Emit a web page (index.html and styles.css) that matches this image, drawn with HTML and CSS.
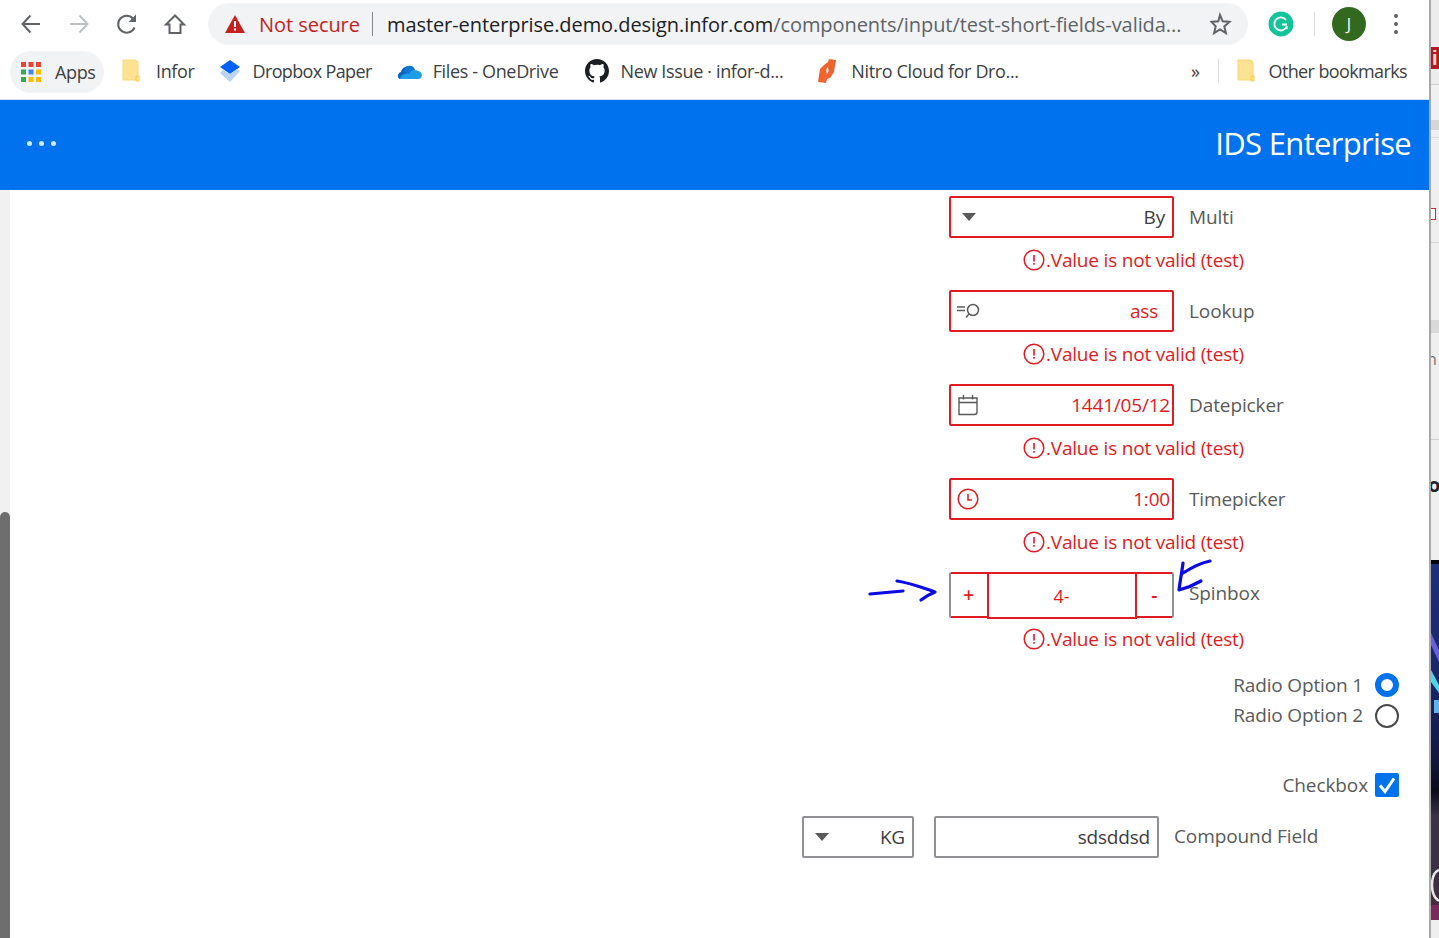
FILE: index.html
```html
<!DOCTYPE html>
<html lang="en">
<head>
<meta charset="utf-8">
<title>IDS Enterprise</title>
<link rel="stylesheet" href="styles.css">
</head>
<body>
<div class="desktop">
  <main class="browser">
    <div class="toolbar">
      <svg class="navicon" width="24" height="24" viewBox="0 0 24 24"><path d="M21 12H4M11.500 3.500 3.500 12l8 8.500" fill="none" stroke="#5f6368" stroke-width="2"/></svg>
      <svg class="navicon" width="24" height="24" viewBox="0 0 24 24"><path d="M3 12h17M12.500 3.500l8 8.500-8 8.500" fill="none" stroke="#bdc1c6" stroke-width="2"/></svg>
      <svg class="navicon" width="24" height="24" viewBox="0 0 24 24"><path d="M19.500 15.500A8.500 8.500 0 1 1 18 6.500" fill="none" stroke="#5f6368" stroke-width="2"/><path d="M21 2.500V10h-7.500z" fill="#5f6368"/></svg>
      <svg class="navicon" width="24" height="24" viewBox="0 0 24 24"><path d="M12 3.500 3 12.500h3.500V21h11v-8.500H21z" fill="none" stroke="#5f6368" stroke-width="2"/></svg>
      <div class="omnibox">
        <svg class="warn" width="20" height="18" viewBox="0 0 20 18"><path d="M10 0 20 18H0z" fill="#c5221f"/><path d="M9 6h2v6H9zM9 13.500h2v2H9z" fill="#fff"/></svg>
        <span class="insecure">Not secure</span>
        <span class="omnisep"></span>
        <span class="url">master-enterprise.demo.design.infor.com<span class="urlpath">/components/input/test-short-fields-valida...</span></span>
        <svg class="star" width="24" height="24" viewBox="0 0 24 24"><path d="m12 3 2.700 6.300 6.800.6-5.200 4.500 1.600 6.700-5.900-3.600-5.900 3.600 1.600-6.700L3.500 9.900l6.800-.6z" fill="none" stroke="#5f6368" stroke-width="2"/></svg>
      </div>
      <div class="ext">
        <svg width="26" height="26" viewBox="0 0 26 26"><circle cx="13" cy="13" r="12.500" fill="#15c39a"/><path d="M18 9a6.500 6.500 0 1 0 1 6l-.5 3M19 13.500h-5" fill="none" stroke="#fff" stroke-width="1.800"/></svg>
        <span class="extsep"></span>
        <span class="avatar">J</span>
        <svg class="kebab" width="6" height="22" viewBox="0 0 6 22"><circle cx="3" cy="3" r="2" fill="#5f6368"/><circle cx="3" cy="11" r="2" fill="#5f6368"/><circle cx="3" cy="19" r="2" fill="#5f6368"/></svg>
      </div>
    </div>
    <div class="bookmarks">
      <div class="bm apps">
        <svg width="20" height="20" viewBox="0 0 20 20"><g fill="#ea4335"><rect x="0" y="0" width="5" height="5"/><rect x="7.500" y="0" width="5" height="5"/><rect x="15" y="0" width="5" height="5"/></g><g fill="#34a853"><rect x="0" y="7.500" width="5" height="5"/><rect x="0" y="15" width="5" height="5"/></g><rect x="7.500" y="15" width="5" height="5" fill="#fbbc04"/><rect x="7.500" y="7.500" width="5" height="5" fill="#4285f4"/><g fill="#fbbc04"><rect x="15" y="7.500" width="5" height="5"/><rect x="15" y="15" width="5" height="5"/></g></svg>
        <span>Apps</span>
      </div>
      <div class="bm infor">
        <svg class="folder" width="18" height="24" viewBox="0 0 18 24"><path d="M1 1h13l2 2v18H1z" fill="#fde293" stroke="#fbd871"/><path d="M14 17h3v5h-3z" fill="none" stroke="#f7cb4d"/></svg>
        <span>Infor</span>
      </div>
      <div class="bm dropbox">
        <svg width="22" height="24" viewBox="0 0 22 24"><path d="M11 1 21 8l-10 7L1 8z" fill="#0061fe"/><path d="m11 15 7-5 3 2-10 11L1 14l3-3z" fill="#bcd4ef"/></svg>
        <span class="dropbox-name">Dropbox Paper</span>
      </div>
      <div class="bm onedrive">
        <svg width="26" height="18" viewBox="0 0 26 18"><path d="M3 17c-3-1-3-6 1-7 1-6 9-8 12-3l-5 7z" fill="#0a64b8"/><path d="M7 8c3-6 10-5 11 0l-7 5z" fill="#0f78d4"/><path d="M3 17h19c4-1 4-7-1-8-3-2-7-1-9 3-4-1-9 1-9 5z" fill="#1f9ee8"/></svg>
        <span>Files - OneDrive</span>
      </div>
      <div class="bm github">
        <svg width="24" height="24" viewBox="0 0 16 16"><path d="M8 0C3.580 0 0 3.580 0 8c0 3.540 2.290 6.530 5.470 7.590.4.070.55-.17.55-.38v-1.340c-2.220.48-2.690-1.070-2.690-1.070-.36-.92-.89-1.170-.89-1.170-.73-.5.050-.49.050-.49.800.060 1.230.83 1.230.83.710 1.220 1.870.87 2.330.66.070-.52.280-.87.500-1.070-1.780-.2-3.640-.89-3.640-3.950 0-.87.310-1.590.82-2.150-.08-.2-.36-1.020.080-2.120 0 0 .67-.21 2.200.82A7.660 7.660 0 0 1 8 3.910c.68 0 1.360.09 2 .27 1.530-1.040 2.200-.82 2.200-.82.440 1.100.16 1.920.08 2.120.51.560.82 1.270.82 2.150 0 3.070-1.870 3.750-3.650 3.950.29.250.54.730.54 1.480v2.200c0 .21.150.46.55.38A8.010 8.010 0 0 0 16 8c0-4.420-3.580-8-8-8z" fill="#1b1f23"/></svg>
        <span>New Issue · infor-d...</span>
      </div>
      <div class="bm nitro">
        <svg width="20" height="26" viewBox="0 0 20 26"><path d="M7 7 11 4l1-3 7 1-2 12-4 6-3 1-1 4-8-1 2-13z" fill="#f0642f"/><path d="M10.500 9c1.500 2 1.500 5-.5 7-1-2-1-5 .5-7z" fill="#fff"/></svg>
        <span>Nitro Cloud for Dro...</span>
      </div>
      <div class="bm-end">
        <span class="more">»</span>
        <span class="bmsep"></span>
        <svg class="folder" width="18" height="24" viewBox="0 0 18 24"><path d="M1 1h13l2 2v18H1z" fill="#fde293" stroke="#fbd871"/><path d="M14 17h3v5h-3z" fill="none" stroke="#f7cb4d"/></svg>
        <span class="otherbm">Other bookmarks</span>
      </div>
    </div>
    <header class="appheader">
      <span class="dots"><i></i><i></i><i></i></span>
      <h1 class="apptitle">IDS Enterprise</h1>
    </header>
    <div class="content">
      <div class="scrolltrack"><div class="scrollthumb"></div></div>
      <form class="form">
        <div class="field">
          <div class="input invalid">
            <svg class="caret" width="14" height="8" viewBox="0 0 14 8"><path d="M0 0h14L7 8z" fill="#5a5a5a"/></svg>
            <span class="val val-dark">By</span>
          </div>
          <span class="label">Multi</span>
        </div>
        <div class="error"><svg class="erricon" width="22" height="22" viewBox="0 0 22 22"><circle cx="11" cy="11" r="9.800" fill="none" stroke="#e01b22" stroke-width="1.500"/><path d="M10.200 6h1.600v6.500h-1.600zM10.200 14h1.600v1.800h-1.600z" fill="#e01b22"/></svg><span>.Value is not valid (test)</span></div>
        <div class="field">
          <div class="input invalid">
            <svg class="inicon inicon-lookup" width="24" height="20" viewBox="0 0 24 20"><path d="M0 6h8M0 9.500h8" stroke="#5a5a5a" stroke-width="1.300"/><circle cx="16" cy="9" r="5.500" fill="none" stroke="#5a5a5a" stroke-width="1.500"/><path d="m12 13-3 3.500" stroke="#5a5a5a" stroke-width="1.500"/></svg>
            <span class="val val-pad">ass</span>
          </div>
          <span class="label">Lookup</span>
        </div>
        <div class="error"><svg class="erricon" width="22" height="22" viewBox="0 0 22 22"><circle cx="11" cy="11" r="9.800" fill="none" stroke="#e01b22" stroke-width="1.500"/><path d="M10.200 6h1.600v6.500h-1.600zM10.200 14h1.600v1.800h-1.600z" fill="#e01b22"/></svg><span>.Value is not valid (test)</span></div>
        <div class="field">
          <div class="input invalid">
            <svg class="inicon" width="24" height="24" viewBox="0 0 24 24"><path d="M3 5h18v14c0 1.500-1 2.500-2.500 2.500H3zM3 9.500h18M7.500 2v4.500M16.500 2v4.500" fill="none" stroke="#5a5a5a" stroke-width="1.400"/></svg>
            <span class="val">1441/05/12</span>
          </div>
          <span class="label">Datepicker</span>
        </div>
        <div class="error"><svg class="erricon" width="22" height="22" viewBox="0 0 22 22"><circle cx="11" cy="11" r="9.800" fill="none" stroke="#e01b22" stroke-width="1.500"/><path d="M10.200 6h1.600v6.500h-1.600zM10.200 14h1.600v1.800h-1.600z" fill="#e01b22"/></svg><span>.Value is not valid (test)</span></div>
        <div class="field">
          <div class="input invalid">
            <svg class="inicon" width="24" height="24" viewBox="0 0 24 24"><circle cx="12" cy="12" r="9.800" fill="none" stroke="#e01b22" stroke-width="1.500"/><path d="M12 7v6h4" fill="none" stroke="#e01b22" stroke-width="1.500"/></svg>
            <span class="val">1:00</span>
          </div>
          <span class="label">Timepicker</span>
        </div>
        <div class="error"><svg class="erricon" width="22" height="22" viewBox="0 0 22 22"><circle cx="11" cy="11" r="9.800" fill="none" stroke="#e01b22" stroke-width="1.500"/><path d="M10.200 6h1.600v6.500h-1.600zM10.200 14h1.600v1.800h-1.600z" fill="#e01b22"/></svg><span>.Value is not valid (test)</span></div>
        <div class="field field-spin">
          <div class="spinbox">
            <span class="spinbtn spinbtn-l">+</span>
            <span class="spinval">4-</span>
            <span class="spinbtn spinbtn-r">-</span>
          </div>
          <span class="label">Spinbox</span>
        </div>
        <div class="error error-last"><svg class="erricon" width="22" height="22" viewBox="0 0 22 22"><circle cx="11" cy="11" r="9.800" fill="none" stroke="#e01b22" stroke-width="1.500"/><path d="M10.200 6h1.600v6.500h-1.600zM10.200 14h1.600v1.800h-1.600z" fill="#e01b22"/></svg><span>.Value is not valid (test)</span></div>
        <div class="options">
          <div class="option"><span class="option-text">Radio Option 1</span><span class="radio radio-on"></span></div>
          <div class="option"><span class="option-text">Radio Option 2</span><span class="radio"></span></div>
          <div class="option option-check"><span class="option-text">Checkbox</span>
            <svg width="24" height="24" viewBox="0 0 24 24"><rect width="24" height="24" rx="2" fill="#0072ed"/><path d="m5 12.500 5 6 9-13" fill="none" stroke="#fff" stroke-width="3"/></svg>
          </div>
        </div>
        <div class="compound">
          <div class="input unit">
            <svg class="caret" width="14" height="8" viewBox="0 0 14 8"><path d="M0 0h14L7 8z" fill="#5a5a5a"/></svg>
            <span class="val val-dark">KG</span>
          </div>
          <div class="input amount"><span class="val val-dark val-pad2">sdsddsd</span></div>
          <span class="label label-raised">Compound Field</span>
        </div>
      </form>
      <svg class="scribble" width="345" height="70" viewBox="0 0 345 70"><g fill="none" stroke="#0a0ae6" stroke-width="3.200" stroke-linecap="round" stroke-linejoin="round"><path d="M2 35c10-1 22-2 33-3M29 22c14 2 26 7 38 11-5 2-10 5-14 8"/><path d="M342 2c-10 2-19 7-27 12M315 4c-1 9-3 18-4 27 8-2 15-5 22-9"/></g></svg>
    </div>
  </main>
  <aside class="behind">
    <div class="bh-top"></div>
    <div class="bh-red">i</div>
    <div class="bh-rule1"></div>
    <div class="bh-mark"></div>
    <div class="bh-rule2"></div>
    <div class="bh-sq"></div>
    <div class="bh-rule3"></div>
    <div class="bh-band"></div>
    <div class="bh-n">n</div>
    <div class="bh-line"></div>
    <div class="bh-ou">ou</div>
    <svg class="bh-img" width="8" height="360" viewBox="0 0 8 360">
      <defs><linearGradient id="shot" x1="0" y1="0" x2="0" y2="1"><stop offset="0" stop-color="#1c2f78"/><stop offset=".35" stop-color="#1a2668"/><stop offset=".55" stop-color="#10173f"/><stop offset=".64" stop-color="#0a0a18"/><stop offset=".71" stop-color="#3a3344"/><stop offset=".86" stop-color="#3a3040"/><stop offset="1" stop-color="#4a2a40"/></linearGradient></defs>
      <rect width="8" height="360" fill="url(#shot)"/>
      <rect width="8" height="4" fill="#05050a"/>
      <path d="M0 73 8 90v12L0 85z" fill="#6a5fd8"/>
      <path d="M0 110 8 125v8L0 122z" fill="#4fd6e6"/>
      <rect x="3" y="140" width="5" height="13" fill="#5fb4e8"/>
      <path d="M8 310c-5 2-7 7-7 15s2 13 7 16" fill="none" stroke="#e8e8e8" stroke-width="2.500"/>
      <rect y="345" width="8" height="15" fill="#7a2a5a"/>
    </svg>
  </aside>
</div>
</body>
</html>
```
FILE: styles.css
```css
* { box-sizing: border-box; }
html, body { margin: 0; height: 100%; overflow: hidden; background: #fff; }
body { font-family: "Open Sans", "Noto Sans", sans-serif; color: #5a5a5a; }
.desktop { display: flex; width: 1439px; height: 938px; }
.browser { position: relative; width: 1429px; height: 938px; display: flex; flex-direction: column; background: #fff; }

.toolbar { height: 50px; display: flex; align-items: center; padding: 0 0 2px 19px; flex: none; }
.navicon { margin-right: 24px; flex: none; }
.navicon:nth-of-type(4) { margin-right: 21px; }
.omnibox { width: 1040px; height: 42px; background: #f1f3f4; border-radius: 21px; display: flex; align-items: center; padding-left: 17px; flex: none; }
.warn { flex: none; }
.insecure { color: #c5221f; font-size: 20px; margin-left: 14px; letter-spacing: -.05px; white-space: nowrap; }
.omnisep { width: 1px; height: 24px; background: #80868b; margin: 0 14px 0 12px; flex: none; }
.url { color: #202124; font-size: 20px; letter-spacing: -.07px; white-space: nowrap; }
.urlpath { color: #5f6368; }
.star { margin-left: auto; margin-right: 16px; flex: none; }
.ext { display: flex; align-items: center; flex: none; margin-left: 20px; }
.extsep { width: 1px; height: 24px; background: #dadce0; margin: 0 17px 0 20px; }
.avatar { width: 34px; height: 34px; border-radius: 50%; background: #33691e; color: #fff; font-size: 16px; display: flex; align-items: center; justify-content: center; }
.kebab { margin-left: 27px; }

.bookmarks { height: 49px; display: flex; align-items: center; padding: 0 0 7px 10px; flex: none; color: #3c4043; font-size: 18px; letter-spacing: -.35px; white-space: nowrap; }
.bm { display: flex; align-items: center; flex: none; }
.apps { width: 94px; height: 42px; border-radius: 21px; background: #f1f3f4; padding-left: 11px; gap: 14px; margin: 2px 18px 0 0; }
.infor { gap: 16px; margin-right: 24px; }
.dropbox { gap: 12px; margin-right: 25px; }
.dropbox-name { letter-spacing: -.65px; }
.onedrive { gap: 10px; margin-right: 27px; }
.github { gap: 11px; margin-right: 34px; }
.nitro { gap: 14px; }
.bm-end { margin-left: auto; display: flex; align-items: center; padding-right: 22px; }
.more { font-size: 18px; }
.bmsep { width: 1px; height: 24px; background: #dadce0; margin: 0 18px 0 18px; }
.otherbm { margin-left: 14px; letter-spacing: -.62px; }

.appheader { height: 91px; background: #0072ed; border-top: 1px solid #cfe3fb; display: flex; align-items: center; justify-content: space-between; padding: 0 18px 4px 27px; flex: none; }
.dots { display: flex; gap: 7px; }
.dots i { width: 5px; height: 5px; border-radius: 50%; background: #d4e6fb; }
.apptitle { margin: 0; color: #fff; font-size: 31px; font-weight: 400; letter-spacing: -.68px; }

.content { flex: 1; display: flex; position: relative; min-height: 0; }
.scrolltrack { width: 10px; background: #f1f1f1; padding-top: 322px; flex: none; }
.scrollthumb { height: 426px; background: #6e6e6e; border-radius: 5px 5px 0 0; }
.form { flex: 1; padding: 6px 30px 0 792px; font-size: 19px; letter-spacing: -.1px; }
.field { display: flex; align-items: center; gap: 15px; margin-left: 147px; }
.input { height: 42px; display: flex; align-items: center; justify-content: space-between; border: 2px solid #8f9094; border-radius: 2px; background: #fff; }
.invalid { width: 225px; border-color: #e01b22; }
.caret { margin-left: 11px; flex: none; }
.inicon { margin-left: 5px; flex: none; }
.inicon-lookup { margin-left: 6px; }
.val { color: #e01b22; padding-right: 2px; white-space: nowrap; letter-spacing: -.2px; }
.val-dark { color: #3c3c3c; padding-right: 7px; }
.val-pad { padding-right: 14px; }
.val-pad2 { margin-left: auto; padding-right: 7px; }
.label { color: #5a5a5a; white-space: nowrap; line-height: 42px; }
.label-raised { line-height: 40px; padding-bottom: 2px; }
.error { height: 52px; display: flex; align-items: center; margin-left: 221px; padding-bottom: 8px; color: #e01b22; white-space: nowrap; letter-spacing: -.2px; }
.error-last { height: 42px; padding-bottom: 0; }
.erricon { flex: none; margin-right: 1px; }
.field-spin { height: 46px; align-items: flex-start; }
.spinbox { position: relative; width: 225px; height: 46px; display: flex; border-left: 2px solid #8f9094; border-right: 2px solid #8f9094; border-radius: 2px; color: #e01b22; }
.spinbtn { flex: 1; height: 46px; display: flex; align-items: center; justify-content: center; border-top: 2px solid #e01b22; border-bottom: 2px solid #e01b22; font-weight: 600; }
.spinval { width: 150px; height: 47px; flex: none; display: flex; align-items: center; justify-content: center; border: 2px solid #e01b22; font-size: 18px; }
.options { display: flex; flex-direction: column; align-items: flex-end; margin-top: 10px; letter-spacing: -.15px; }
.option { height: 30.5px; display: flex; align-items: center; gap: 12px; color: #5a5a5a; }
.option-text { padding-bottom: 1px; }
.radio { width: 24px; height: 24px; border-radius: 50%; border: 2px solid #4a4a4a; flex: none; }
.radio-on { border: 6px solid #0072ed; }
.option-check { gap: 7px; margin-top: 39px; height: 30px; letter-spacing: -.1px; }
.compound { display: flex; align-items: center; margin-top: 16px; }
.unit { width: 112px; margin-right: 20px; }
.amount { width: 225px; margin-right: 15px; }
.scribble { position: absolute; left: 868px; top: 369px; pointer-events: none; }

.behind { width: 10px; height: 938px; flex: none; display: flex; flex-direction: column; overflow: hidden; background: #efefef; border-left: 2px solid #a8a8a8; }
.bh-top { height: 47px; background: #ececec; flex: none; }
.bh-red { height: 22px; background: #b01c24; color: #f0d8d8; font: 700 20px/22px "Liberation Sans", sans-serif; padding-left: 1px; flex: none; }
.bh-rule1 { height: 16px; border-bottom: 1px solid #cfcfcf; background: #ececec; flex: none; }
.bh-mark { height: 45px; flex: none; background: linear-gradient(#f0f0f0 35px, #d6d6d6 35px); }
.bh-rule2 { height: 71px; border-top: 1px solid #dcdcdc; margin-top: 7px; flex: none; }
.bh-sq { width: 5px; height: 12px; border: 1px solid #c0303a; border-left: 0; background: #fff; flex: none; }
.bh-rule3 { height: 100px; background: linear-gradient(#efefef 22px, #d6d6d6 22px, #d6d6d6 23px, #efefef 23px); flex: none; }
.bh-band { height: 13px; background: #d9d9d9; flex: none; }
.bh-n { height: 40px; font-size: 16px; line-height: 52px; color: #777; margin-left: -4px; flex: none; }
.bh-line { height: 67px; border-bottom: 1px solid #d0d0d0; flex: none; }
.bh-ou { height: 120px; margin-left: -3px; color: #222; font: 700 20px/90px "Open Sans", sans-serif; white-space: nowrap; flex: none; }
.bh-img { flex: none; display: block; }
```
